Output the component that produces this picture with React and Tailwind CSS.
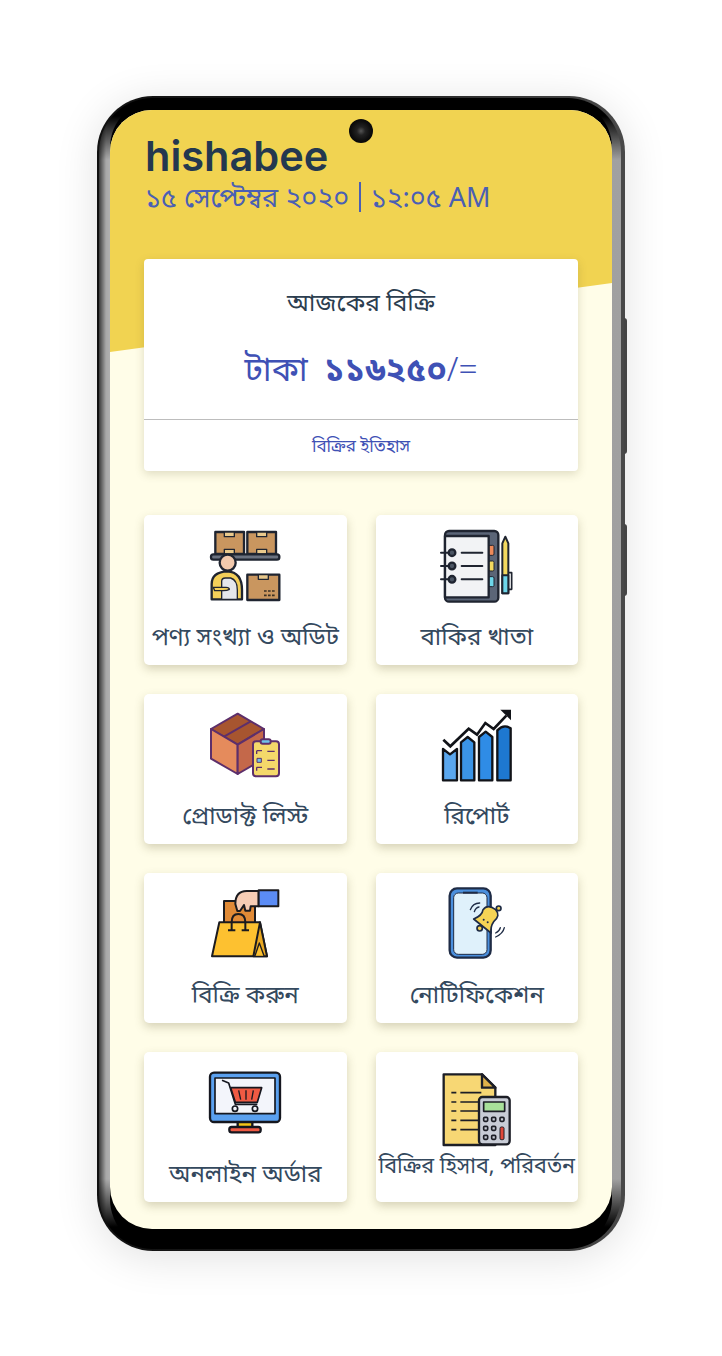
const S = "#1f2430";
const Shelf = () => (
  <svg className="overflow-visible" width="80" height="80" viewBox="195 45 240 240" fill="none">
    <g stroke={S} strokeWidth="7" strokeLinejoin="round">
      <rect x="226" y="66" width="86" height="66" fill="#c9965f" />
      <rect x="322" y="66" width="86" height="66" fill="#c9965f" />
      <rect x="253" y="66" width="30" height="14" fill="#e9c98c" strokeWidth="4" />
      <rect x="350" y="66" width="30" height="14" fill="#e9c98c" strokeWidth="4" />
      <rect x="253" y="118" width="30" height="14" fill="#e9c98c" strokeWidth="4" />
      <rect x="350" y="118" width="30" height="14" fill="#e9c98c" strokeWidth="4" />
      <rect x="213" y="133" width="205" height="16" rx="7" fill="#6b7280" />
      <rect x="322" y="194" width="96" height="76" fill="#c9965f" />
      <rect x="355" y="194" width="30" height="14" fill="#e9c98c" strokeWidth="4" />
      <path d="M215 268V222Q215 186 262 184Q306 186 306 240V268Z" fill="#f3cf59" />
      <path d="M245 268V214Q245 204 256 204H272Q292 210 292 240V268Z" fill="#e5e7eb" strokeWidth="4" />
      <path d="M220 232H258Q268 232 268 238Q262 242 250 242H224Z" fill="#f3cf59" strokeWidth="4" />
      <circle cx="263" cy="158" r="24" fill="#f2c9ad" />
    </g>
    <path d="M372 243H408M372 256H408" stroke="#3b3024" strokeWidth="5" strokeDasharray="8 4" />
  </svg>
);
const Notebook = () => (
  <svg className="overflow-visible" width="80" height="80" viewBox="200 45 240 240" fill="none">
    <g stroke={S} strokeWidth="7" strokeLinejoin="round">
      <rect x="224" y="63" width="160" height="212" rx="12" fill="#5b6577" />
      <rect x="355" y="106" width="16" height="30" rx="4" fill="#ee8a5a" strokeWidth="3" />
      <rect x="355" y="153" width="16" height="30" rx="4" fill="#f3d95f" strokeWidth="3" />
      <rect x="355" y="200" width="16" height="30" rx="4" fill="#6ed6ea" strokeWidth="3" />
      <rect x="224" y="78" width="131" height="184" fill="#f2f3f5" />
      <path d="M412 188H424V238H412" strokeWidth="5" />
      <path d="M396 100L405 80L414 100V250H396Z" fill="#f3d95f" strokeWidth="6" />
      <path d="M396 196H414V250H396Z" fill="#6ed6ea" strokeWidth="6" />
      <path d="M274 128H336M274 168H336M274 208H336M212 128H236M212 168H236M212 208H236" strokeLinecap="round" strokeWidth="6" />
      <circle cx="245" cy="128" r="10" fill="#4b5563" />
      <circle cx="245" cy="168" r="10" fill="#4b5563" />
      <circle cx="245" cy="208" r="10" fill="#4b5563" />
    </g>
  </svg>
);
const BoxList = () => {
  const P = "#5d2f6b";
  return (
    <svg className="overflow-visible" width="80" height="80" viewBox="195 43 240 240" fill="none">
      <g stroke={P} strokeWidth="6" strokeLinejoin="round">
        <path d="M293 72L372 118L293 165L213 118Z" fill="#a7552f" />
        <path d="M213 118L293 165V253L213 207Z" fill="#e58b5c" />
        <path d="M293 165L372 118V207L293 253Z" fill="#c4684a" />
        <path d="M252 141L332 95" />
        <rect x="339" y="155" width="78" height="105" rx="9" fill="#f4d86a" />
        <rect x="362" y="149" width="30" height="13" rx="6" fill="#6fc3e8" />
        <path d="M350 183H366M350 183V193M350 233H366M350 233V243M382 185H404M382 212H404M382 238H404" strokeWidth="4" />
        <rect x="351" y="206" width="13" height="12" fill="#6fc3e8" strokeWidth="3" />
      </g>
    </svg>
  );
};
const Chart = () => (
  <svg className="overflow-visible" width="80" height="80" viewBox="200 43 240 240" fill="none">
    <g stroke="#111318" strokeWidth="7" strokeLinejoin="round">
      <path d="M218 178L239 194L260 178V272H218Z" fill="#5aa7ee" />
      <path d="M272 158L292 142L312 158V272H272Z" fill="#3b94e6" />
      <path d="M326 142L346 126L366 142V272H326Z" fill="#2f8ce6" />
      <path d="M381 122Q400 102 421 116V272H381Z" fill="#1e78d0" />
    </g>
    <path d="M219 150L240 170L295 117L320 135L345 100L370 118L408 78" stroke="#111318" strokeWidth="8" />
    <path d="M390 60H422V92Z" fill="#111318" />
  </svg>
);
const Bag = () => (
  <svg className="overflow-visible" width="80" height="80" viewBox="195 42 240 240" fill="none">
    <g stroke="#1b1b1f" strokeWidth="6" strokeLinejoin="round">
      <rect x="252" y="96" width="93" height="68" fill="#e08a36" />
      <path d="M286 105Q286 66 320 66H356V112H332L330 125H316L312 108L300 126H292Z" fill="#f6cdb5" />
      <rect x="356" y="64" width="59" height="48" fill="#5b8cf5" />
      <path d="M238 160H360L381 262H216Z" fill="#fdc130" />
      <path d="M275 184V160Q275 135 295 135Q316 135 316 160V184" />
      <path d="M264 184H286M305 184H327" strokeWidth="6" />
      <path d="M360 160L381 262H340Z" fill="#e9a822" />
      <path d="M345 260L358 222L372 260" fill="#fdc130" strokeWidth="4" />
    </g>
  </svg>
);
const Phone = () => (
  <svg className="overflow-visible" width="80" height="80" viewBox="200 42 240 240" fill="none">
    <g stroke="#1e2b45" strokeLinejoin="round">
      <rect x="238" y="58" width="123" height="208" rx="22" fill="#4a8fdd" strokeWidth="7" />
      <rect x="250" y="72" width="100" height="184" rx="14" fill="#dff1fb" strokeWidth="3" />
      <path d="M278 71H322" strokeWidth="6" />
    </g>
    <g stroke="#1e2b45" strokeWidth="5" strokeLinejoin="round">
      <path d="M310 150Q336 140 338 122Q352 104 376 122Q392 140 370 158Q360 172 362 192Z" fill="#f6d455" />
      <circle cx="385" cy="118" r="7" fill="#f6d455" />
      <circle cx="328" cy="178" r="8" fill="#f6d455" />
      <path d="M300 122Q308 102 328 102M312 128Q316 116 326 114M402 176Q398 194 376 204M390 176Q388 186 376 192" strokeWidth="4" strokeLinecap="round" />
    </g>
    <circle cx="340" cy="152" r="3" fill="#1e2b45" />
    <circle cx="352" cy="160" r="3" fill="#1e2b45" />
  </svg>
);
const Monitor = () => (
  <svg className="overflow-visible" width="80" height="80" viewBox="195 55 240 240" fill="none">
    <g stroke="#15171f" strokeWidth="7" strokeLinejoin="round">
      <rect x="293" y="234" width="44" height="18" fill="#f5c518" />
      <rect x="268" y="250" width="94" height="16" rx="7" fill="#ef5a43" />
      <rect x="210" y="87" width="210" height="148" rx="12" fill="#5aa0ef" />
      <rect x="225" y="103" width="180" height="107" fill="#f3f5fb" strokeWidth="5" />
      <path d="M246 110L266 118L286 182H352" strokeWidth="5" />
      <path d="M272 132H365L352 176H286Z" fill="#ef5a43" strokeWidth="5" />
      <path d="M296 140L302 168M318 140V168M340 140L335 168" strokeWidth="4" />
      <circle cx="285" cy="195" r="8" fill="#f3f5fb" strokeWidth="5" />
      <circle cx="345" cy="195" r="8" fill="#f3f5fb" strokeWidth="5" />
    </g>
  </svg>
);
const Calc = () => (
  <svg className="overflow-visible" width="80" height="80" viewBox="200 55 240 240" fill="none">
    <g stroke="#1c1e26" strokeWidth="7" strokeLinejoin="round">
      <path d="M220 92H335L375 132V304H220Z" fill="#f7d774" />
      <path d="M335 92V132H375Z" fill="#e0b24a" />
      <path d="M243 147H258M270 147H333M243 175H258M270 175H325M243 202H258M270 202H325M243 230H258M270 230H325M243 258H258M270 258H325" strokeWidth="5" />
      <rect x="326" y="160" width="92" height="142" rx="10" fill="#c8ccd6" />
      <rect x="340" y="175" width="63" height="28" fill="#a8e09a" strokeWidth="5" />
      <rect x="389" y="250" width="12" height="38" rx="4" fill="#e0483a" strokeWidth="3" />
    </g>
    <g fill="#c8ccd6" stroke="#1c1e26" strokeWidth="5">
      <rect x="340" y="221" width="12" height="12" rx="3" />
      <rect x="364" y="221" width="12" height="12" rx="3" />
      <rect x="389" y="221" width="12" height="12" rx="3" />
      <rect x="340" y="248" width="12" height="12" rx="3" />
      <rect x="364" y="248" width="12" height="12" rx="3" />
      <rect x="340" y="275" width="12" height="12" rx="3" />
      <rect x="364" y="275" width="12" height="12" rx="3" />
    </g>
  </svg>
);

const items = [
  { Icon: Shelf, label: "পণ্য সংখ্যা ও অডিট" },
  { Icon: Notebook, label: "বাকির খাতা" },
  { Icon: BoxList, label: "প্রোডাক্ট লিস্ট" },
  { Icon: Chart, label: "রিপোর্ট" },
  { Icon: Bag, label: "বিক্রি করুন" },
  { Icon: Phone, label: "নোটিফিকেশন" },
  { Icon: Monitor, label: "অনলাইন অর্ডার" },
  { Icon: Calc, label: "বিক্রির হিসাব, পরিবর্তন", small: true },
];

export default function App() {
  return (
    <div className="w-[722px] h-[1356px] bg-white pt-[96px] pl-[97px] overflow-hidden font-['Noto_Sans','Noto_Sans_Bengali','Liberation_Sans',sans-serif]">
      <div className="relative w-[528px] h-[1155px] rounded-[56px] bg-[linear-gradient(to_right,#111_0,#1c1c1c_50%,#484848_99%)] pl-[2px] pr-[4px] py-[2px] shadow-[0_6px_44px_rgba(0,0,0,0.12)]">
        <div className="absolute -right-[2px] top-[222px] w-[3px] h-[136px] bg-[#444] rounded-r-sm" />
        <div className="absolute -right-[2px] top-[428px] w-[3px] h-[72px] bg-[#444] rounded-r-sm" />
        <div className="h-full rounded-[54px] pl-[11px] pr-[9px] bg-[linear-gradient(to_bottom,#000_0,#000_18px,transparent_62px,transparent_calc(100%-70px),#000_calc(100%-22px),#000_100%),linear-gradient(to_right,#3a3a3a_0,#6a6a6a_3px,#a8a8a8_7px,#b0b0b0_11px,#a0a0a0_100%)]">
          <div className="h-full rounded-[50px] bg-black pt-[12px]">
            <div className="relative h-[1119px] rounded-[42px] overflow-hidden bg-[#fffde8] px-[34px]">
              <div className="absolute inset-x-0 top-0 h-[242px] bg-[#f1d351] [clip-path:polygon(0_0,100%_0,100%_173px,0_242px)]" />
              <div className="absolute left-[239px] top-[9px] w-[24px] h-[24px] rounded-full bg-[radial-gradient(circle,#555_0,#222_25%,#0c0c0c_60%,#000_100%)]" />
              <div className="relative">
                <div className="pt-[21px] pl-[1px] text-[41.5px] leading-[50px] font-semibold text-[#24384f] font-['Inter',sans-serif]">hishabee</div>
                <div className="pl-[1px] h-[32px] flex items-center text-[27px] leading-[32px] text-[#4a5fb4] whitespace-nowrap">
                  <span>১৫ সেপ্টেম্বর ২০২০</span>
                  <span className="mx-[10px] w-[1.5px] h-[30px] bg-[#4a5fb4]" />
                  <span>১২:০৫ AM</span>
                </div>
                <div className="mt-[46px] h-[212px] rounded-[4px] bg-white shadow-[0_3px_10px_rgba(90,85,40,0.2)] flex flex-col">
                  <div className="h-[160px] flex flex-col items-center">
                    <div className="mt-[27px] h-[32px] leading-[32px] text-[24.5px] text-[#2c3e50]">আজকের বিক্রি</div>
                    <div className="mt-[28px] h-[44px] leading-[44px] text-[33.5px] text-[#3f51b5]">
                      টাকা <span className="ml-2 font-bold">১১৬২৫০</span><span className="font-light">/=</span>
                    </div>
                  </div>
                  <div className="h-px bg-[#bdbdbd]" />
                  <div className="flex-1 flex items-center justify-center text-[17px] text-[#3f51b5]">বিক্রির ইতিহাস</div>
                </div>
                <div className="mt-[44px] grid grid-cols-2 gap-[29px]">
                  {items.map(({ Icon, label, small }) => (
                    <div key={label} className="h-[150px] rounded-[5px] bg-white shadow-[0_4px_10px_rgba(90,85,40,0.25)] flex flex-col items-center pt-[10px]">
                      <Icon />
                      <div className={small ? "mt-[7px] text-[21.5px] leading-[32px] text-[#34495e] whitespace-nowrap" : "mt-[15px] text-[24px] leading-[32px] text-[#34495e] whitespace-nowrap"}>{label}</div>
                    </div>
                  ))}
                </div>
              </div>
            </div>
          </div>
        </div>
      </div>
    </div>
  );
}
